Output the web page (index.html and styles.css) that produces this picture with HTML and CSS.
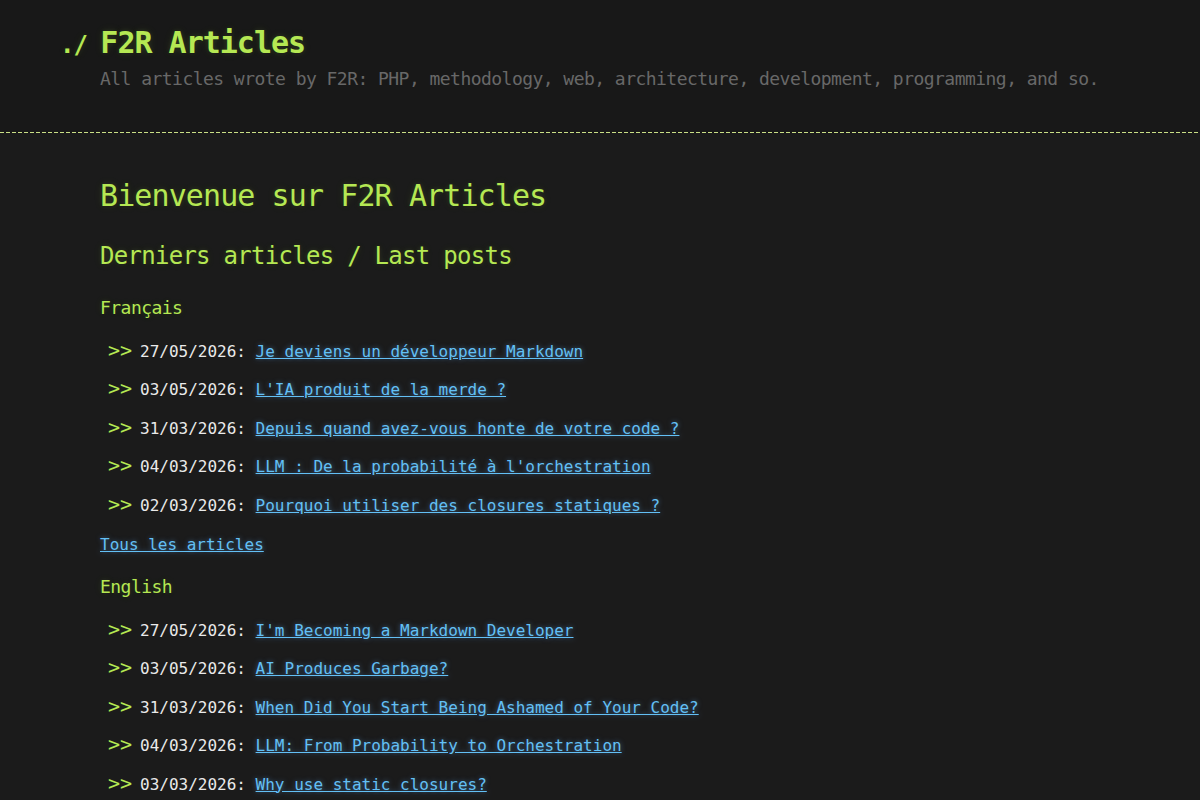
FILE: index.html
```html
<!DOCTYPE html>
<html lang="fr">
<head>
<meta charset="utf-8">
<title>F2R Articles</title>
<link rel="stylesheet" href="styles.css">
</head>
<body>
<header class="site-header">
  <div class="container">
    <h1 class="site-title">F2R Articles</h1>
    <h2 class="site-desc">All articles wrote by F2R: PHP, methodology, web, architecture, development, programming, and so.</h2>
  </div>
</header>
<div class="container">
  <section class="main-content">
    <h1 class="h1">Bienvenue sur F2R Articles</h1>
    <h2 class="h2">Derniers articles / Last posts</h2>
    <h3 class="h3">Français</h3>
    <ul class="posts">
      <li><p>27/05/2026: <a href="#">Je deviens un développeur Markdown</a></p></li>
      <li><p>03/05/2026: <a href="#">L'IA produit de la merde ?</a></p></li>
      <li><p>31/03/2026: <a href="#">Depuis quand avez-vous honte de votre code ?</a></p></li>
      <li><p>04/03/2026: <a href="#">LLM : De la probabilité à l'orchestration</a></p></li>
      <li><p>02/03/2026: <a href="#">Pourquoi utiliser des closures statiques ?</a></p></li>
    </ul>
    <p class="para"><a href="#">Tous les articles</a></p>
    <h3 class="h3">English</h3>
    <ul class="posts">
      <li><p>27/05/2026: <a href="#">I'm Becoming a Markdown Developer</a></p></li>
      <li><p>03/05/2026: <a href="#">AI Produces Garbage?</a></p></li>
      <li><p>31/03/2026: <a href="#">When Did You Start Being Ashamed of Your Code?</a></p></li>
      <li><p>04/03/2026: <a href="#">LLM: From Probability to Orchestration</a></p></li>
      <li><p>03/03/2026: <a href="#">Why use static closures?</a></p></li>
    </ul>
    <p class="para"><a href="#">All articles</a></p>
  </section>
</div>
</body>
</html>
```

FILE: styles.css
```css
html, body {
  margin: 0;
  padding: 0;
}
body {
  background: #1b1b1b;
  color: #eaeaea;
  font-size: 16px;
  line-height: 1.5;
  font-family: "DejaVu Sans Mono", "Liberation Mono", monospace;
}
.container {
  width: 90%;
  max-width: 1000px;
  margin: 0 auto;
}
.site-header {
  background: #181818;
  padding: 20px 0 21px;
  margin: 0 0 40px 0;
  position: relative;
}
.site-header::after {
  content: "";
  position: absolute;
  left: 0;
  right: 0;
  bottom: 0;
  height: 1px;
  background: repeating-linear-gradient(to right, #cadf86 0 4px, transparent 4px 6px);
}
.site-title {
  font-size: 30px;
  line-height: 1.5;
  margin: 0 0 0 -40px;
  font-weight: bold;
  color: #b5e853;
  letter-spacing: -1px;
  text-shadow: 0 1px 1px rgba(0,0,0,0.1), 0 0 5px rgba(181,232,83,0.1), 0 0 10px rgba(181,232,83,0.1);
}
.site-title::before {
  content: "./ ";
  font-size: 24px;
}
.site-desc {
  font-size: 18px;
  line-height: 1.5;
  font-weight: normal;
  color: #686868;
  letter-spacing: -0.03em;
  margin: 0 0 20px;
}
.main-content {
  margin: 0 0 20px;
}
.h1, .h2, .h3 {
  font-weight: normal;
  color: #b5e853;
  letter-spacing: -0.03em;
  margin: 0 0 20px;
  line-height: 1.5;
  text-shadow: 0 1px 1px rgba(0,0,0,0.1), 0 0 5px rgba(181,232,83,0.1), 0 0 10px rgba(181,232,83,0.1);
}
.h1 { font-size: 30px; }
.h2 { font-size: 24px; }
.h3 { font-size: 18px; }
.posts {
  list-style: none;
  padding-left: 40px;
  margin: 16px 0;
}
.posts li {
  line-height: 1.4;
}
.posts li p {
  margin: 16px 0;
}
.posts li p::before {
  content: ">>";
  display: inline-block;
  color: #b5e853;
  font-size: 20px;
  line-height: 16px;
  letter-spacing: 0;
  margin-left: -32px;
  width: 32px;
}
.para {
  margin: 16px 0;
}
a {
  color: #63c0f5;
  text-shadow: 0 0 5px rgba(104,182,255,0.5);
}
```
